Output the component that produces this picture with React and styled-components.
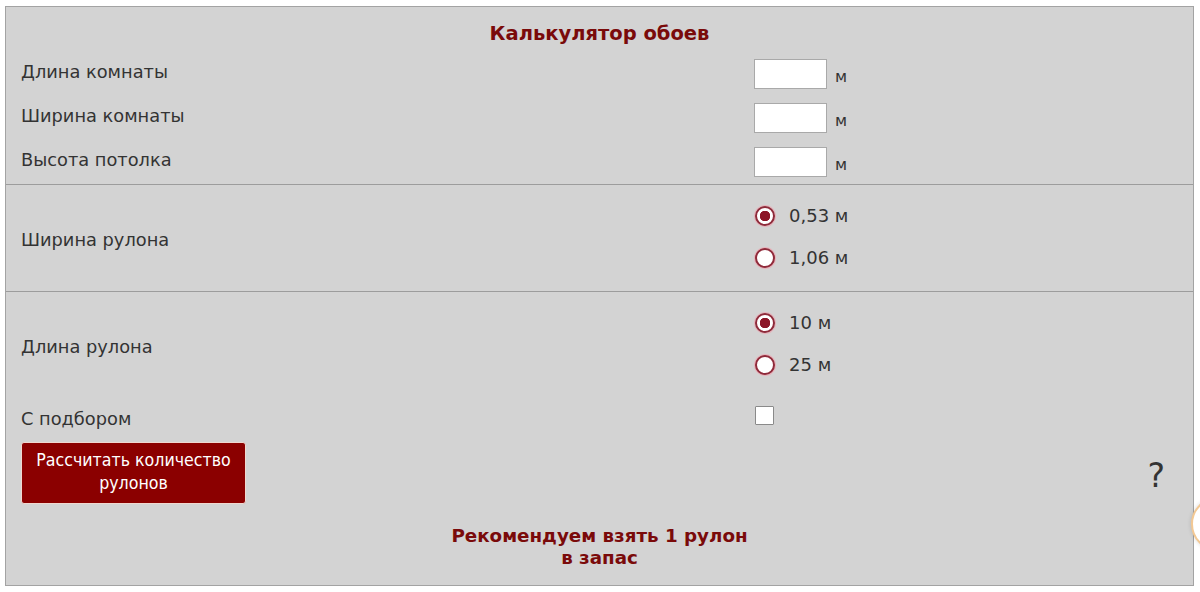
import React, { useState } from 'react';
import styled, { createGlobalStyle } from 'styled-components';

const GlobalStyle = createGlobalStyle`
  html, body {
    margin: 0;
    padding: 0;
    background: #ffffff;
    overflow: hidden;
  }
  body {
    font-family: "DejaVu Sans", Verdana, sans-serif;
  }
`;

const Page = styled.div`
  position: relative;
  width: 1200px;
  height: 592px;
  padding: 6px 0 0 5px;
  box-sizing: border-box;
`;

const Calculator = styled.form`
  width: 1189px;
  height: 580px;
  box-sizing: border-box;
  background: #d3d3d3;
  border: 1px solid #a3a3a3;
  color: #333333;
  font-size: 17.8px;
`;

const Title = styled.div`
  padding-top: 16px;
  text-align: center;
  font-size: 19.5px;
  line-height: 22px;
  font-weight: bold;
  color: #7a0a0a;
`;

const Section = styled.div`
  display: grid;
  grid-template-columns: 733px 1fr;
  padding: ${(p) => p.$top || 0}px 15px ${(p) => p.$bottom || 0}px;
  border-bottom: ${(p) => (p.$divider ? '1px solid #9c9c9c' : 'none')};
`;

const Label = styled.div`
  display: flex;
  align-items: center;
  height: ${(p) => p.$h || 44}px;
  padding-bottom: ${(p) => p.$shift || 0}px;
  padding-top: ${(p) => p.$drop || 0}px;
  box-sizing: border-box;
`;

const Field = styled.div`
  display: flex;
  align-items: center;
  gap: 8px;
  height: ${(p) => p.$h || 44}px;
  padding-top: ${(p) => p.$drop || 0}px;
  box-sizing: border-box;
`;

const Options = styled.div`
  display: flex;
  flex-direction: column;
`;

const TextInput = styled.input`
  width: 73px;
  height: 30px;
  box-sizing: border-box;
  margin: 0;
  border: 1px solid #a9a9a9;
  background: #ffffff;
  font: inherit;
`;

const Unit = styled.span`
  font-size: 16px;
  padding-top: 5px;
`;

const Radio = styled.input.attrs({ type: 'radio' })`
  appearance: none;
  width: 20px;
  height: 20px;
  margin: 0 0 0 1px;
  border-radius: 50%;
  border: 2px solid #8f2a3a;
  box-shadow: 0 0 0 1px #e6b3bb;
  background: #ffffff;
  box-sizing: border-box;
  &:checked {
    background: radial-gradient(circle, #8c1628 0 5px, #ffffff 5.5px);
  }
`;

const OptionText = styled.span`
  margin-left: 6px;
  padding-bottom: 2px;
  font-size: 18px;
`;

const Checkbox = styled.input.attrs({ type: 'checkbox' })`
  appearance: none;
  width: 19px;
  height: 19px;
  margin: 0 0 0 1px;
  border: 1px solid #8a8a8a;
  background: #ffffff;
  border-radius: 1px;
  box-sizing: border-box;
`;

const Actions = styled.div`
  display: flex;
  justify-content: space-between;
  align-items: center;
  padding: 6px 28px 0 15px;
`;

const CalcButton = styled.button`
  width: 225px;
  height: 62px;
  box-sizing: border-box;
  background: #8b0000;
  color: #ffffff;
  border: 1px solid #f0d8d0;
  border-radius: 3px;
  font-family: "DejaVu Sans Condensed", "DejaVu Sans", sans-serif;
  font-size: 17.6px;
  line-height: 23px;
  padding: 0 6px 2px;
`;

const Help = styled.span`
  font-family: "DejaVu Sans", sans-serif;
  font-size: 33px;
  color: #333333;
  padding-top: 4px;
`;

const Result = styled.div`
  padding-top: 21px;
  text-align: center;
  font-weight: bold;
  font-size: 18.3px;
  line-height: 22px;
  color: #7a0a0a;
`;

const SideBadge = styled.div`
  position: absolute;
  left: 1191px;
  top: 497px;
  width: 50px;
  height: 50px;
  border-radius: 50%;
  background: #ffffff;
  border: 2px solid #f3c893;
  box-shadow: 0 0 4px rgba(0, 0, 0, 0.15);
`;

const sizes = [
  { id: 'len', label: 'Длина комнаты' },
  { id: 'wid', label: 'Ширина комнаты' },
  { id: 'hei', label: 'Высота потолка' },
];

export default function App() {
  const [rollWidth, setRollWidth] = useState('0.53');
  const [rollLength, setRollLength] = useState('10');

  return (
    <Page>
      <GlobalStyle />
      <Calculator onSubmit={(e) => e.preventDefault()}>
        <Title>Калькулятор обоев</Title>
        <Section $divider $top={7}>
          {sizes.map((s) => (
            <React.Fragment key={s.id}>
              <Label $shift={5}>{s.label}</Label>
              <Field>
                <TextInput type="text" />
                <Unit>м</Unit>
              </Field>
            </React.Fragment>
          ))}
        </Section>

        <Section $divider $top={10} $bottom={12}>
          <Label $h={84} $drop={4}>Ширина рулона</Label>
          <Options>
            {[['0.53', '0,53 м'], ['1.06', '1,06 м']].map(([v, t]) => (
              <Field $h={42} key={v}>
                <Radio name="rw" checked={rollWidth === v} onChange={() => setRollWidth(v)} />
                <OptionText>{t}</OptionText>
              </Field>
            ))}
          </Options>
        </Section>

        <Section $top={10}>
          <Label $h={84} $drop={4}>Длина рулона</Label>
          <Options>
            {[['10', '10 м'], ['25', '25 м']].map(([v, t]) => (
              <Field $h={42} key={v}>
                <Radio name="rl" checked={rollLength === v} onChange={() => setRollLength(v)} />
                <OptionText>{t}</OptionText>
              </Field>
            ))}
          </Options>
          <Label $h={50} $drop={15}>С подбором</Label>
          <Field $h={50} $drop={9}>
            <Checkbox />
          </Field>
        </Section>

        <Actions>
          <CalcButton type="submit">Рассчитать количество рулонов</CalcButton>
          <Help>?</Help>
        </Actions>

        <Result>
          Рекомендуем взять 1 рулон
          <br />
          в запас
        </Result>
      </Calculator>
      <SideBadge />
    </Page>
  );
}
